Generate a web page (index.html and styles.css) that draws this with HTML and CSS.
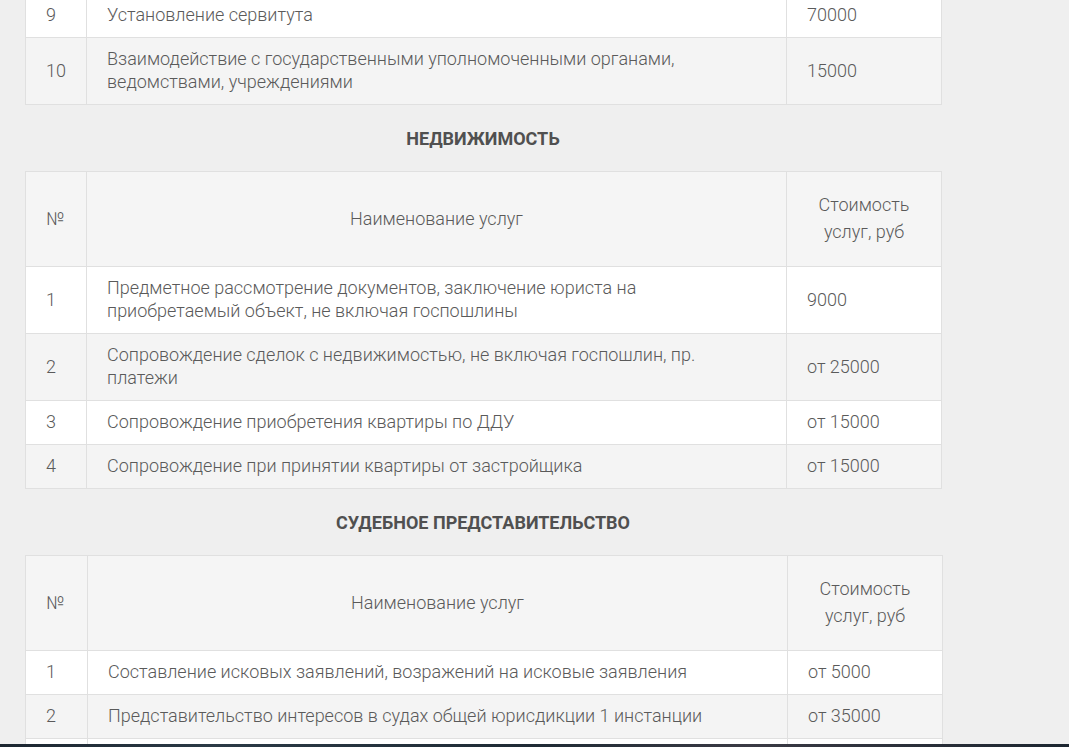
FILE: index.html
```html
<!DOCTYPE html>
<html lang="ru">
<head>
<meta charset="utf-8">
<title>Цены на услуги</title>
<link rel="stylesheet" href="styles.css">
</head>
<body>
<main class="content">
  <table class="price-table price-table--top">
    <colgroup><col class="c-num"><col class="c-name"><col class="c-price"></colgroup>
    <tbody>
      <tr class="odd"><td>9</td><td>Установление сервитута</td><td>70000</td></tr>
      <tr class="even"><td>10</td><td>Взаимодействие с государственными уполномоченными органами, ведомствами, учреждениями</td><td>15000</td></tr>
    </tbody>
  </table>

  <h3 class="section-title">НЕДВИЖИМОСТЬ</h3>

  <table class="price-table">
    <colgroup><col class="c-num"><col class="c-name"><col class="c-price"></colgroup>
    <thead>
      <tr><th class="th-num">№</th><th>Наименование услуг</th><th>Стоимость<br>услуг, руб</th></tr>
    </thead>
    <tbody>
      <tr class="odd"><td>1</td><td>Предметное рассмотрение документов, заключение юриста на приобретаемый объект, не включая госпошлины</td><td>9000</td></tr>
      <tr class="even"><td>2</td><td>Сопровождение сделок с недвижимостью, не включая госпошлин, пр. платежи</td><td>от 25000</td></tr>
      <tr class="odd"><td>3</td><td>Сопровождение приобретения квартиры по ДДУ</td><td>от 15000</td></tr>
      <tr class="even"><td>4</td><td>Сопровождение при принятии квартиры от застройщика</td><td>от 15000</td></tr>
    </tbody>
  </table>

  <h3 class="section-title">СУДЕБНОЕ ПРЕДСТАВИТЕЛЬСТВО</h3>

  <table class="price-table price-table--wide-num">
    <colgroup><col class="c-num"><col class="c-name"><col class="c-price"></colgroup>
    <thead>
      <tr><th class="th-num">№</th><th>Наименование услуг</th><th>Стоимость<br>услуг, руб</th></tr>
    </thead>
    <tbody>
      <tr class="odd"><td>1</td><td>Составление исковых заявлений, возражений на исковые заявления</td><td>от 5000</td></tr>
      <tr class="even"><td>2</td><td>Представительство интересов в судах общей юрисдикции 1 инстанции</td><td>от 35000</td></tr>
      <tr class="odd"><td>&nbsp;</td><td>&nbsp;</td><td>&nbsp;</td></tr>
    </tbody>
  </table>
</main>
<div class="taskbar-edge"></div>
</body>
</html>
```

FILE: styles.css
```css
html, body {
  margin: 0;
  padding: 0;
  background: #efefef;
  overflow: hidden;
}

body {
  font-family: Roboto, "Noto Sans", sans-serif;
  font-size: 18px;
  font-weight: 300;
  color: #5a5a5a;
}

.content {
  width: 916px;
  padding-left: 25px;
}

.price-table {
  width: 916px;
  table-layout: fixed;
  border-collapse: collapse;
  border: 1px solid #e0e0e0;
}

.price-table--top {
  margin-top: -7px;
}

.c-num { width: 61px; }
.c-name { width: 700px; }
.c-price { width: 155px; }

.price-table--wide-num .c-num { width: 62px; }

.price-table td,
.price-table th {
  border: 1px solid #e0e0e0;
  vertical-align: middle;
  text-align: left;
}

.price-table td {
  padding: 9px 20px 11px;
  line-height: 23px;
}

.price-table td:nth-child(2) {
  padding-right: 60px;
}

.price-table th {
  background: #f5f5f5;
  font-weight: 300;
  text-align: center;
  padding: 19px 20px 21px;
  line-height: 27px;
}

.price-table th.th-num {
  text-align: left;
}

.odd { background: #ffffff; }
.even { background: #f4f4f4; }

.section-title {
  margin: 0;
  padding: 22px 0 20px;
  line-height: 24px;
  text-align: center;
  font-size: 18px;
  font-weight: 700;
  color: #505050;
}

.taskbar-edge {
  position: fixed;
  left: 0;
  right: 0;
  bottom: 0;
  height: 3px;
  background: linear-gradient(90deg, #1c2630, #2b3a46 20%, #1f2b35 50%, #3a3a44 70%, #1c2630);
}
```
